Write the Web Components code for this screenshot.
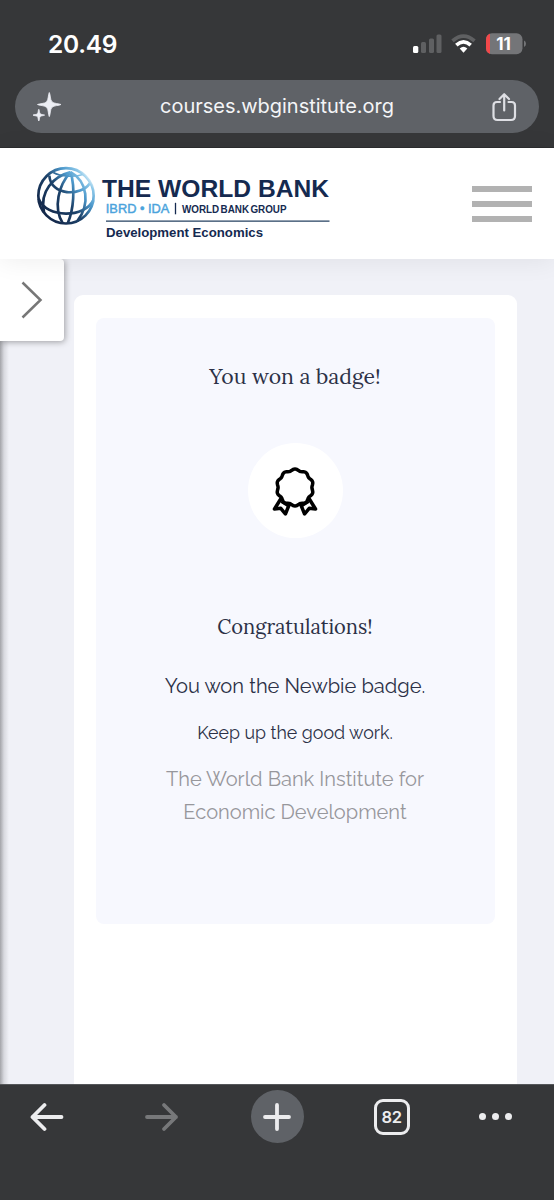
<!DOCTYPE html>
<html lang="en">
<head>
<meta charset="utf-8">
<title>The World Bank - Development Economics</title>
<style>
  body {
    margin: 0;
    height: 1200px;
    overflow: hidden;
    display: flex;
    flex-direction: column;
    background: #363739;
    font-family: Inter, "Liberation Sans", sans-serif;
  }
</style>
</head>
<body>

<template id="browser-top-template">
  <style>
    :host {
      display: block;
      box-sizing: border-box;
      height: 148px;
      flex: none;
      background: #363739;
      border-bottom: 1px solid #2c2d2f;
      color: #fff;
    }
    .status {
      display: flex;
      align-items: center;
      height: 80px;
      padding: 8px 28px 0 48px;
      box-sizing: border-box;
    }
    .time {
      flex: 1;
      font-size: 24.5px;
      font-weight: 600;
      letter-spacing: -0.3px;
    }
    .pill {
      display: flex;
      align-items: center;
      justify-content: space-between;
      height: 53px;
      margin: 0 15px;
      padding: 0 21px 0 17px;
      box-sizing: border-box;
      border-radius: 27px;
      background: #5f6267;
    }
    .url {
      padding-bottom: 2px;
      font-size: 20px;
      letter-spacing: -0.02px;
      color: #f4f5f7;
    }
    svg { display: block; }
  </style>
  <div class="status">
    <span class="time">20.49</span>
    <svg width="114" height="24" viewBox="0 0 114 24">
      <g fill="#5f6062">
        <rect x="9" y="10" width="5" height="11" rx="1.5"/>
        <rect x="17" y="6.5" width="5" height="14.5" rx="1.5"/>
        <rect x="24.5" y="2.5" width="5" height="18.5" rx="1.5"/>
      </g>
      <rect x="1" y="14" width="5.3" height="7" rx="1.5" fill="#fff"/>
      <g fill="none" stroke-width="3.6">
        <path d="M40.5 8.9Q51.5 -0.8 62.5 8.9" stroke="#5f6062"/>
        <path d="M44.3 13.1Q51.5 6.7 58.7 13.1" stroke="#fff"/>
      </g>
      <path d="M47.7 16.4Q51.5 13.2 55.3 16.4L51.5 20.8Z" fill="#fff"/>
      <clipPath id="cell"><rect x="74" y="1.2" width="36.5" height="21" rx="6"/></clipPath>
      <g clip-path="url(#cell)">
        <rect x="74" y="1" width="37" height="22" fill="#747578"/>
        <rect x="74" y="1" width="4" height="22" fill="#f1484a"/>
      </g>
      <path d="M112 8.5Q114 9.5 114 11.7T112 15Z" fill="#747578"/>
      <text x="91.5" y="17.8" text-anchor="middle" font-size="17" font-weight="700" fill="#fff">11</text>
    </svg>
  </div>
  <div class="pill">
    <svg width="30" height="32" viewBox="0 0 30 32" fill="#eceef4" stroke="#eceef4" stroke-width=".8" stroke-linejoin="round">
      <path d="M17.300 1.500C18.500 3.500 18 8.500 20 10.800C22 12.800 27 12.500 29 13.500C27 14.700 22 14.300 20 16.300C18 18.400 18.500 23.500 17.300 25.600C16.100 23.500 16.600 18.400 14.600 16.300C12.600 14.300 7.500 14.700 5.500 13.500C7.500 12.500 12.600 12.800 14.600 10.800C16.600 8.500 16.100 3.500 17.300 1.500Z"/>
      <path d="M6.800 18.300C7.600 19.500 7.200 21.500 8.200 22.700C9.300 23.800 11.500 23.400 12.600 24.100C11.500 24.900 9.300 24.500 8.200 25.600C7.200 26.800 7.600 28.800 6.800 30C6 28.800 6.400 26.800 5.400 25.600C4.300 24.500 2.100 24.900 1 24.100C2.100 23.400 4.300 23.800 5.400 22.700C6.400 21.500 6 19.500 6.800 18.300Z"/>
    </svg>
    <span class="url">courses.wbginstitute.org</span>
    <svg width="26" height="30" viewBox="1 0 26 30" fill="none" stroke="#dedfe4" stroke-width="2.2" stroke-linecap="round" stroke-linejoin="round">
      <path d="M9 10H6Q2.500 10 2.500 13.500V24Q2.500 28 6.500 28H20Q24 28 24 24V13.500Q24 10 20.500 10H17.500M13.200 18.500V2.500M8.500 7L13.200 2.200L18 7"/>
    </svg>
  </div>
</template>

<template id="bank-logo-template">
  <style>
    :host { display: block; padding-top: 1px; }
    svg { display: block; }
    text { font-family: "Liberation Sans", Arial, sans-serif; }
  </style>
  <svg width="330" height="110" viewBox="20 149.2 330 110">
    <linearGradient id="globe" gradientUnits="userSpaceOnUse" x1="75" y1="185" x2="209" y2="78">
      <stop offset="0" stop-color="#14294b"/>
      <stop offset="0.42" stop-color="#1c426a"/>
      <stop offset="0.7" stop-color="#4c98cb"/>
      <stop offset="0.9" stop-color="#8dc8e9"/>
      <stop offset="1" stop-color="#edf8fd"/>
    </linearGradient>
    <g transform="translate(20 150) scale(.33333)" fill="none" stroke="url(#globe)" stroke-width="8">
      <circle cx="138" cy="138" r="83"/>
      <path d="M152 67C100 80 58 125 72 187"/>
      <path d="M152 67C116 105 99 173 128 220"/>
      <path d="M152 67C166 115 161 180 143 221"/>
      <path d="M152 67C203 95 211 163 172 214"/>
      <path d="M88 77C92 140 184 139 209 101"/>
      <path d="M56 147C79 207 196 204 220 151"/>
      <path d="M100 68C122 81 169 82 188 74" stroke-width="5"/>
    </g>
    <text x="102" y="197.2" font-size="24.3" font-weight="700" fill="#152a50" textLength="227" lengthAdjust="spacingAndGlyphs">THE WORLD BANK</text>
    <text x="105.8" y="213.5" font-size="13.2" fill="#4ba3dc" stroke="#4ba3dc" stroke-width=".45" textLength="63.5" lengthAdjust="spacingAndGlyphs">IBRD • IDA</text>
    <path d="M175.500 203V214.500" stroke="#152a50" stroke-width="1.300"/>
    <text x="182" y="213.3" font-size="11.2" font-weight="700" word-spacing="-1.5" fill="#152a50" textLength="104.5" lengthAdjust="spacingAndGlyphs">WORLD BANK GROUP</text>
    <path d="M106 221.300H329.500" stroke="#254061" stroke-width="1.200"/>
    <text x="106" y="237" font-size="13" font-weight="700" fill="#152a50" textLength="157" lengthAdjust="spacingAndGlyphs">Development Economics</text>
  </svg>
</template>

<template id="site-header-template">
  <style>
    :host {
      position: relative;
      z-index: 2;
      display: flex;
      flex: none;
      align-items: center;
      justify-content: space-between;
      box-sizing: border-box;
      height: 111px;
      padding: 0 22.5px 0 20px;
      background: #fff;
      box-shadow: 0 2px 24px rgba(0, 0, 0, .07);
    }
    .menu {
      display: flex;
      flex-direction: column;
      gap: 9px;
      width: 59.5px;
    }
    .menu i { height: 6px; background: #b2b2b2; }
  </style>
  <slot></slot>
  <div class="menu"><i></i><i></i><i></i></div>
</template>

<template id="course-page-template">
  <style>
    :host {
      position: relative;
      display: block;
      flex: none;
      box-sizing: border-box;
      height: 825px;
      padding: 36px 37px 0 74px;
      overflow: hidden;
      background: #f0f1f7;
    }
    .edge {
      position: absolute;
      left: 0;
      top: 0;
      width: 9px;
      height: 100%;
      background: linear-gradient(90deg, #a3a4a9, #d8d9df 45%, #f0f1f7);
    }
    .drawer {
      position: absolute;
      left: 0;
      top: 0;
      display: flex;
      align-items: center;
      box-sizing: border-box;
      width: 63.5px;
      height: 82px;
      padding-left: 20px;
      background: #fff;
      border-radius: 0 4px 4px 0;
      box-shadow: 1px 1px 6px rgba(0, 0, 0, .35);
    }
    .sheet {
      box-sizing: border-box;
      height: 820px;
      padding: 23px 22px 0;
      border-radius: 9px;
      background: #fff;
    }
  </style>
  <div class="edge"></div>
  <div class="drawer">
    <svg width="24" height="40" viewBox="0 0 24 40" fill="none" stroke="#777" stroke-width="2.5"><path d="M2.500 2.500L20.500 20L2.500 37.500"/></svg>
  </div>
  <div class="sheet"><slot></slot></div>
</template>

<template id="badge-card-template">
  <style>
    :host {
      display: flex;
      flex-direction: column;
      align-items: center;
      box-sizing: border-box;
      height: 606px;
      padding: 43px 1px 0 0;
      border-radius: 8px;
      background: #f7f8fe;
      color: #2c3147;
      text-align: center;
      font-family: Raleway, Lato, "Liberation Sans", sans-serif;
      font-weight: 400;
    }
    h2, h3, p { margin: 0; font-weight: inherit; white-space: nowrap; }
    h2, h3 {
      font-family: Lora, "Liberation Serif", serif;
      line-height: 32px;
      font-weight: 400;
    }
    h2 { font-size: 21.2px; }
    h3 { font-size: 20.1px; margin-top: 73px; }
    .medal {
      display: flex;
      align-items: center;
      justify-content: center;
      width: 95px;
      height: 95px;
      margin-top: 50px;
      border-radius: 50%;
      background: #fff;
    }
    .won { margin-top: 27px; font-size: 20.1px; line-height: 32px; }
    .keep { margin-top: 17px; font-size: 17.8px; line-height: 28px; }
    .from { margin-top: 16px; font-size: 20.05px; line-height: 32.5px; color: #97979c; }
  </style>
  <h2><slot name="title"></slot></h2>
  <div class="medal">
    <svg width="50" height="54" viewBox="0 0 50 54" fill="none" stroke="#000" stroke-width="3.5" stroke-linejoin="round">
      <path d="M11 34.500L4.500 45L10.800 44.300L15.400 50L19.500 40"/>
      <path d="M39 34.500L45.500 45L39.200 44.300L34.600 50L30.500 40"/>
      <path d="M11 38L17.500 42M39 38L32.500 42" stroke-width="2"/>
      <path class="rosette" fill="#fff"/>
    </svg>
  </div>
  <h3><slot name="heading"></slot></h3>
  <p class="won"><slot name="won"></slot></p>
  <p class="keep"><slot name="keep"></slot></p>
  <p class="from"><slot name="from"></slot></p>
</template>

<template id="browser-toolbar-template">
  <style>
    :host {
      display: grid;
      grid-template-columns: 93px 137px 94px 135px 1fr;
      flex: none;
      box-sizing: border-box;
      height: 116px;
      padding: 5px 0 0;
      border-top: 1px solid #55575a;
      background: #363739;
      color: #ececee;
    }
    div {
      display: flex;
      align-items: center;
      justify-content: center;
      height: 53px;
    }
    .plus {
      width: 53px;
      border-radius: 50%;
      background: #5f6267;
      justify-self: center;
    }
    .tabs {
      box-sizing: border-box;
      width: 36px;
      height: 36px;
      margin-top: 9px;
      border: 3px solid #ececee;
      border-radius: 9px;
      font-size: 16.5px;
      font-weight: 600;
      letter-spacing: -0.5px;
      justify-self: center;
    }
    .more { gap: 5.5px; padding-right: 22px; }
    .more i { width: 7.5px; height: 7.5px; border-radius: 50%; background: #ececee; }
    svg { display: block; fill: none; stroke: currentColor; stroke-width: 3.8; stroke-linecap: round; stroke-linejoin: round; }
    .forward { color: #77787a; }
  </style>
  <div><svg width="34" height="30" viewBox="0.5 0 34 30"><path d="M15 3L3 15L15 27M3 15H32"/></svg></div>
  <div class="forward"><svg width="34" height="30" viewBox="0 0 34 30"><path d="M19 3L31 15L19 27M31 15H2"/></svg></div>
  <div class="plus"><svg width="28" height="28" viewBox="0 0 28 28"><path d="M14 2V26M2 14H26"/></svg></div>
  <div class="tabs">82</div>
  <div class="more"><i></i><i></i><i></i></div>
</template>

<browser-top></browser-top>
<site-header><bank-logo></bank-logo></site-header>
<course-page>
  <badge-card>
    <span slot="title">You won a badge!</span>
    <span slot="heading">Congratulations!</span>
    <span slot="won">You won the Newbie badge.</span>
    <span slot="keep">Keep up the good work.</span>
    <span slot="from">The World Bank Institute for<br>Economic Development</span>
  </badge-card>
</course-page>
<browser-toolbar></browser-toolbar>

<script>
  class TemplateElement extends HTMLElement {
    constructor() {
      super();
      const template = document.getElementById(`${this.localName}-template`);
      this.attachShadow({ mode: 'open' }).appendChild(template.content.cloneNode(true));
    }
  }

  class BadgeCard extends TemplateElement {
    connectedCallback() {
      // rosette outline with ten rounded bumps
      let d = '';
      for (let a = 0; a < 360; a += 3) {
        const t = a * Math.PI / 180;
        const r = 17.7 + 0.8 * Math.cos(10 * t);
        const x = 25 + r * Math.sin(t);
        const y = 23.5 - r * Math.cos(t);
        d += `${a ? 'L' : 'M'}${x.toFixed(2)} ${y.toFixed(2)}`;
      }
      this.shadowRoot.querySelector('.rosette').setAttribute('d', d + 'Z');
    }
  }

  customElements.define('browser-top', class extends TemplateElement {});
  customElements.define('bank-logo', class extends TemplateElement {});
  customElements.define('site-header', class extends TemplateElement {});
  customElements.define('course-page', class extends TemplateElement {});
  customElements.define('badge-card', BadgeCard);
  customElements.define('browser-toolbar', class extends TemplateElement {});
</script>
</body>
</html>
